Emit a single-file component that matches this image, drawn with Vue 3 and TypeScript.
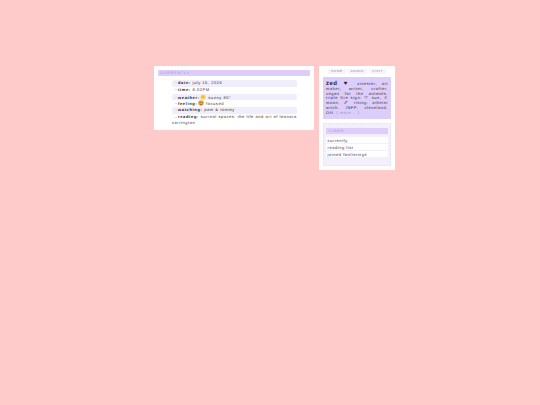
<script setup lang="ts">
const rows = [
  { k: 'date:', v: 'july 15, 2025', alt: true },
  { k: 'time:', v: '8:02PM', alt: false },
  { k: 'weather:', v: 'sunny 80°', icon: 'sun', alt: true },
  { k: 'feeling:', v: 'focused', icon: 'face', alt: false },
  { k: 'watching:', v: 'pam & tommy', alt: true },
]
const nav = ['HOME', 'ADMIN', 'VISIT']
const links = ['currently', 'reading list', 'joined fanlistings']
</script>

<template>
  <div class="page">
    <section class="card main">
      <h2 class="title">CURRENTLY</h2>
      <ul class="list">
        <li v-for="r in rows" :key="r.k" class="row" :class="{ alt: r.alt }">
          <span class="dot"></span><b>{{ r.k }}</b>
          <svg v-if="r.icon === 'sun'" class="ico" viewBox="0 0 6 6"><circle cx="3" cy="3" r="2.6" fill="#f6d46a" /><circle cx="3" cy="3" r="1.6" fill="#eebb3f" /></svg>
          <svg v-if="r.icon === 'face'" class="ico" viewBox="0 0 6 6"><circle cx="3" cy="3" r="2.8" fill="#e8a23c" /><rect x="1.4" y="2" width="1.1" height=".7" fill="#8a5a20" /><rect x="3.5" y="2" width="1.1" height=".7" fill="#8a5a20" /><rect x="2" y="4" width="2" height=".6" fill="#8a5a20" /></svg>
          {{ r.v }}
        </li>
        <li class="row reading"><span class="dot"></span><b>reading:</b> surreal spaces: the life and art of leonora carrington</li>
      </ul>
    </section>
    <aside class="card side">
      <nav class="nav"><a v-for="n in nav" :key="n">{{ n }}</a></nav>
      <div class="bio">
        <b class="name">zed</b> <span class="heart">♥</span> zinester, art maker, writer, crafter. vegan for the animals. triple fire sign: <span class="sym">♈&#xFE0E;</span> sun, <span class="sym">♌&#xFE0E;</span> moon, <span class="sym">♐&#xFE0E;</span> rising. atheist witch. INFP. cleveland, OH. <span class="more">[ more... ]</span>
      </div>
      <div class="links">
        <h3 class="ltitle">LINKS</h3>
        <a v-for="l in links" :key="l" class="link">{{ l }}</a>
      </div>
    </aside>
  </div>
</template>

<style>
html, body { background: #ffcaca; }
</style>

<style scoped>
.page {
  display: flex;
  align-items: flex-start;
  gap: 5px;
  padding: 66px 0 0 154px;
  font-family: "Liberation Sans", Arial, sans-serif;
  color: #333;
  font-size: 4px;
  letter-spacing: .55px;
  text-rendering: geometricPrecision;
}
.card { background: #fff; box-sizing: border-box; border-radius: 1px; }
.main { width: 160px; height: 64px; padding: 4px; }
.title {
  margin: 0;
  height: 6px;
  line-height: 6px;
  padding-left: 2px;
  background: #dccdfa;
  border-radius: 1px;
  font-size: 3.5px;
  font-weight: 400;
  letter-spacing: 1px;
  color: #a48fd6;
}
.list { list-style: none; margin: 4px 0 0; padding: 0 13px 0 14px; }
.row { height: 6.8px; line-height: 6.8px; padding-left: 3px; border-radius: 2px; white-space: nowrap; }
.row.alt { background: #f1eefb; }
.row b { color: #222; letter-spacing: .65px; }
.dot { display: inline-block; width: 1.5px; height: 1px; background: #ddd; margin-right: 1.5px; vertical-align: middle; }
.reading { height: auto; line-height: 6px; white-space: normal; margin: .5px -1px 0 0; padding: 0; text-indent: 3px; }
.ico { display: inline-block; width: 6px; height: 6px; vertical-align: -1.4px; margin: 0 .5px; }
.side { width: 76px; height: 104px; padding: 3px 4px; }
.nav { display: flex; justify-content: space-between; padding: 0 5px; font-size: 3px; letter-spacing: .7px; color: #8a8098; }
.nav a { background: #f6f3fd; padding: 0 3px; height: 5px; line-height: 5px; }
.bio {
  margin-top: 3px;
  background: #dccdfa;
  padding: 5px 3px 3px;
  height: 42px;
  box-sizing: border-box;
  font-size: 4px;
  line-height: 4.8px;
  text-align: justify;
  color: #333;
}
.name { font-size: 6px; letter-spacing: .4px; color: #222; margin-right: 2px; }
.heart { font-size: 6px; color: #222; margin-right: 2px; }
.sym { font-family: "DejaVu Sans", sans-serif; }
.more { color: #9d86dc; }
.links {
  margin-top: 4px;
  background: #f3effc;
  border: 1px dotted #e6dff7;
  padding: 4px 2px;
  display: flex;
  flex-direction: column;
  height: 43px;
  box-sizing: border-box;
}
.ltitle {
  margin: 0 0 3px;
  height: 6px;
  line-height: 6px;
  padding-left: 3px;
  background: #dccdfa;
  font-size: 3.5px;
  font-weight: 400;
  letter-spacing: 1px;
  color: #a48fd6;
}
.link { background: #fff; height: 6px; line-height: 7px; padding-left: 1.5px; margin-bottom: 1px; color: #333; }
</style>
